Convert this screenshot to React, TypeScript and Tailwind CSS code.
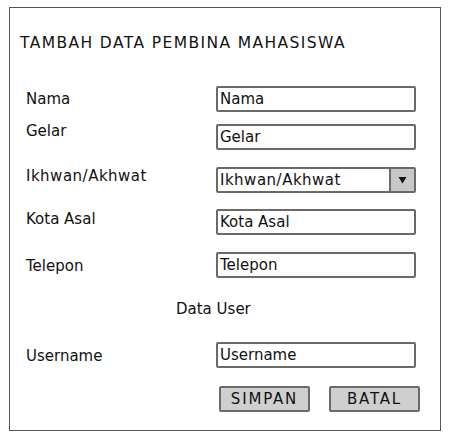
import React from 'react';

const font = { fontFamily: '"DejaVu Sans", "Liberation Sans", sans-serif' };

function Field({ label, value, top, labelTop }: { label: string; value: string; top: string; labelTop: string }) {
  return (
    <div className={`flex items-start ${top}`}>
      <div className={`w-[206px] pl-[16px] text-[15px] leading-[20px] text-[#111] ${labelTop}`}>{label}</div>
      <div className="w-[200px] h-[26px] border-2 border-[#6a6a6a] rounded-[2px] bg-white pl-[2px] text-[15px] leading-[22px] text-[#111]">
        {value}
      </div>
    </div>
  );
}

export default function App() {
  return (
    <div className="w-[460px] h-[442px] bg-white pt-[7px] pl-[9px]" style={font}>
      <div className="w-[432px] h-[424px] border border-[#555] flex flex-col">
        <div className="mt-[23px] ml-[10px] text-[15.5px] leading-[24px] tracking-[1.4px] text-[#111]">TAMBAH DATA PEMBINA MAHASISWA</div>

        <Field label="Nama" value="Nama" top="mt-[31px]" labelTop="mt-[3px]" />
        <Field label="Gelar" value="Gelar" top="mt-[12px]" labelTop="mt-[-3px]" />

        <div className="flex items-start mt-[17px]">
          <div className="w-[206px] pl-[16px] text-[15px] leading-[20px] tracking-[0.5px] text-[#111] mt-[-1px]">Ikhwan/Akhwat</div>
          <div className="w-[200px] h-[26px] border-2 border-[#6a6a6a] rounded-[2px] bg-white flex">
            <div className="flex-1 pl-[2px] text-[15px] leading-[22px] tracking-[0.5px] text-[#111]">Ikhwan/Akhwat</div>
            <div className="w-[25px] h-full bg-[#c8c8c8] border-l-2 border-[#6a6a6a] flex items-center justify-center">
              <svg width="9" height="8" viewBox="0 0 9 8">
                <path d="M0.5 1 L8.5 1 L4.5 7.5 Z" fill="#111" />
              </svg>
            </div>
          </div>
        </div>

        <Field label="Kota Asal" value="Kota Asal" top="mt-[16px]" labelTop="mt-[0px]" />
        <Field label="Telepon" value="Telepon" top="mt-[17px]" labelTop="mt-[4px]" />

        <div className="mt-[19px] pl-[166px] text-[15px] leading-[24px] text-[#111]">Data User</div>

        <Field label="Username" value="Username" top="mt-[21px]" labelTop="mt-[4px]" />

        <div className="flex mt-[18px] pl-[209px] gap-[19px]">
          <div className="w-[91px] h-[26px] border-2 border-[#6a6a6a] rounded-[2px] bg-[#cfcfcf] text-center text-[15px] leading-[22px] tracking-[1.8px] text-[#111]">
            SIMPAN
          </div>
          <div className="w-[91px] h-[26px] border-2 border-[#6a6a6a] rounded-[2px] bg-[#cfcfcf] text-center text-[15px] leading-[22px] tracking-[1.8px] text-[#111]">
            BATAL
          </div>
        </div>
      </div>
    </div>
  );
}
